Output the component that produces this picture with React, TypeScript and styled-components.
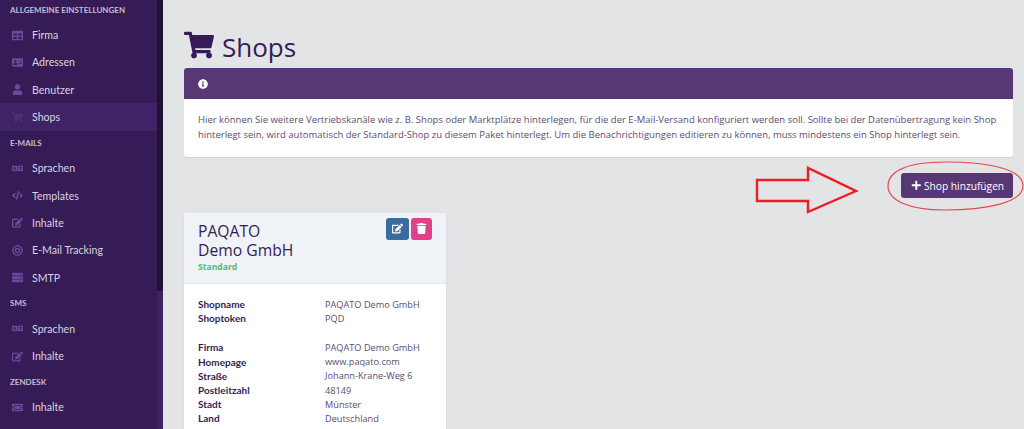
import React from 'react';
import styled, { createGlobalStyle } from 'styled-components';
import {
  FaAddressCard,
  FaBullseye,
  FaCode,
  FaEdit,
  FaInfoCircle,
  FaLanguage,
  FaPlus,
  FaServer,
  FaShoppingCart,
  FaTable,
  FaTicketAlt,
  FaTrash,
  FaUser,
} from 'react-icons/fa';
import { IconType } from 'react-icons';

const GlobalStyle = createGlobalStyle`
  html, body {
    margin: 0;
    height: 100%;
    overflow: hidden;
    background: #e3e4e6;
    font-family: "Open Sans", "Noto Sans", sans-serif;
  }
  * { box-sizing: border-box; }
`;

type NavEntry = { label: string; icon: IconType; active?: boolean };
type NavSection = { title: string; items: NavEntry[] };

const sections: NavSection[] = [
  {
    title: 'ALLGEMEINE EINSTELLUNGEN',
    items: [
      { label: 'Firma', icon: FaTable },
      { label: 'Adressen', icon: FaAddressCard },
      { label: 'Benutzer', icon: FaUser },
      { label: 'Shops', icon: FaShoppingCart, active: true },
    ],
  },
  {
    title: 'E-MAILS',
    items: [
      { label: 'Sprachen', icon: FaLanguage },
      { label: 'Templates', icon: FaCode },
      { label: 'Inhalte', icon: FaEdit },
      { label: 'E-Mail Tracking', icon: FaBullseye },
      { label: 'SMTP', icon: FaServer },
    ],
  },
  {
    title: 'SMS',
    items: [
      { label: 'Sprachen', icon: FaLanguage },
      { label: 'Inhalte', icon: FaEdit },
    ],
  },
  { title: 'ZENDESK', items: [{ label: 'Inhalte', icon: FaTicketAlt }] },
];

const shopRows = [
  ['Shopname', 'PAQATO Demo GmbH'],
  ['Shoptoken', 'PQD'],
];

const addressRows = [
  ['Firma', 'PAQATO Demo GmbH'],
  ['Homepage', 'www.paqato.com'],
  ['Straße', 'Johann-Krane-Weg 6'],
  ['Postleitzahl', '48149'],
  ['Stadt', 'Münster'],
  ['Land', 'Deutschland'],
];

const App = () => {
  return (
    <>
      <GlobalStyle />
      <StyledPage>
        <StyledSidebar>
          <StyledNav>
            {sections.map((section) => (
              <div key={section.title}>
                <StyledSectionTitle>{section.title}</StyledSectionTitle>
                {section.items.map((item) => (
                  <StyledNavItem key={item.label} $active={item.active}>
                    <StyledNavIcon $active={item.active}>
                      <item.icon />
                    </StyledNavIcon>
                    {item.label}
                  </StyledNavItem>
                ))}
              </div>
            ))}
          </StyledNav>
          <StyledScrollTrack>
            <StyledScrollThumb />
          </StyledScrollTrack>
        </StyledSidebar>

        <StyledMain>
          <StyledTitle>
            <FaShoppingCart />
            Shops
          </StyledTitle>

          <StyledAlert>
            <StyledAlertHead>
              <FaInfoCircle />
            </StyledAlertHead>
            <StyledAlertBody>
              Hier können Sie weitere Vertriebskanäle wie z. B. Shops oder Marktplätze hinterlegen, für die der
              E-Mail-Versand konfiguriert werden soll. Sollte bei der Datenübertragung kein Shop hinterlegt sein, wird
              automatisch der Standard-Shop zu diesem Paket hinterlegt. Um die Benachrichtigungen editieren zu können,
              muss mindestens ein Shop hinterlegt sein.
            </StyledAlertBody>
          </StyledAlert>

          <StyledActions>
            <StyledAddButton>
              <FaPlus />
              Shop hinzufügen
            </StyledAddButton>
          </StyledActions>

          <StyledCard>
            <StyledCardHead>
              <div>
                <StyledCardTitle>
                  PAQATO
                  <br />
                  Demo GmbH
                </StyledCardTitle>
                <StyledBadge>Standard</StyledBadge>
              </div>
              <StyledCardButtons>
                <StyledIconButton $color="#3a6c9f" $width={23.5}>
                  <FaEdit />
                </StyledIconButton>
                <StyledIconButton $color="#e2418a" $width={21}>
                  <FaTrash />
                </StyledIconButton>
              </StyledCardButtons>
            </StyledCardHead>
            <StyledCardBody>
              <StyledInfoGrid>
                {shopRows.map(([key, value]) => (
                  <React.Fragment key={key}>
                    <StyledKey>{key}</StyledKey>
                    <StyledValue>{value}</StyledValue>
                  </React.Fragment>
                ))}
              </StyledInfoGrid>
              <StyledInfoGrid>
                {addressRows.map(([key, value]) => (
                  <React.Fragment key={key}>
                    <StyledKey>{key}</StyledKey>
                    <StyledValue>{value}</StyledValue>
                  </React.Fragment>
                ))}
              </StyledInfoGrid>
            </StyledCardBody>
          </StyledCard>
        </StyledMain>

        {/* red annotation drawn over the screenshot */}
        <StyledAnnotation viewBox="0 0 1024 429" fill="none">
          <path
            d="M757 180 H808 V168 L856 191 L808 212 V201 H757 Z"
            stroke="#ee1c25"
            strokeWidth="2.4"
            fill="none"
          />
          <path
            d="M888 186 C888 171 908 162 945 162 C985 162 1023 168 1023 186 C1023 203 985 210 945 210 C908 210 888 200 888 186 Z"
            stroke="#e8474d"
            strokeWidth="1.2"
          />
        </StyledAnnotation>
      </StyledPage>
    </>
  );
};

export default App;

const StyledPage = styled.div`
  position: relative;
  display: flex;
  width: 1024px;
  height: 429px;
  overflow: hidden;
  background: #e3e4e6;
`;

const StyledSidebar = styled.aside`
  display: flex;
  flex: none;
  width: 163px;
  height: 429px;
  background: #351c56;
`;

const StyledNav = styled.nav`
  flex: 1;
  min-width: 0;
  margin-top: -2.5px;
  font-family: 'Lato', sans-serif;
`;

const StyledSectionTitle = styled.div`
  display: flex;
  align-items: center;
  height: 24px;
  padding-left: 10px;
  font-size: 8px;
  font-weight: 700;
  color: #c6bdd3;
  white-space: nowrap;
`;

const StyledNavItem = styled.div<{ $active?: boolean }>`
  display: flex;
  align-items: center;
  height: 27.3px;
  padding-left: 12px;
  font-size: 10.6px;
  color: #d9d3e2;
  background: ${({ $active }) => ($active ? '#3f2366' : 'transparent')};
`;

const StyledNavIcon = styled.span<{ $active?: boolean }>`
  display: flex;
  flex: none;
  justify-content: center;
  width: 11px;
  margin-right: 9px;
  font-size: 11px;
  color: ${({ $active }) => ($active ? '#4c2f77' : '#6a4a9b')};

  svg {
    flex: none;
    width: auto;
    height: 11px;
  }
`;

const StyledScrollTrack = styled.div`
  flex: none;
  width: 6px;
  background: #3e2362;
`;

const StyledScrollThumb = styled.div`
  width: 6px;
  height: 291px;
  background: #1f1236;
`;

const StyledMain = styled.main`
  flex: 1;
  min-width: 0;
  padding: 27px 11px 0 21px;
`;

const StyledTitle = styled.h1`
  display: flex;
  align-items: center;
  gap: 8px;
  height: 41px;
  margin: 0;
  padding-bottom: 1px;
  font-size: 26px;
  font-weight: 500;
  color: #351c56;

  svg {
    flex: none;
    width: 30px;
    height: 30px;
    margin-top: -5px;
  }
`;

const StyledAlert = styled.section`
  background: #fff;
  border-radius: 3px;
  box-shadow: 0 1px 1px rgba(0, 0, 0, 0.08);
  overflow: hidden;
`;

const StyledAlertHead = styled.div`
  display: flex;
  align-items: center;
  height: 31px;
  padding-left: 14px;
  font-size: 10px;
  color: #fff;
  background: #573875;
`;

const StyledAlertBody = styled.div`
  height: 58px;
  padding: 13px 14px 0;
  font-size: 9.5px;
  line-height: 15px;
  color: #5c4d70;
`;

const StyledActions = styled.div`
  display: flex;
  justify-content: flex-end;
  margin-top: 16px;
`;

const StyledAddButton = styled.button`
  display: flex;
  align-items: center;
  gap: 2.5px;
  width: 112px;
  height: 25px;
  padding: 0 0 0 10px;
  font-family: inherit;
  font-size: 10.2px;
  color: #fff;
  white-space: nowrap;
  background: #573875;
  border: none;
  border-radius: 3px;

  svg {
    flex: none;
    width: 10.5px;
    height: 10.5px;
  }
`;

const StyledCard = styled.section`
  width: 262px;
  margin-top: 15px;
  background: #fff;
  box-shadow: 0 1px 2px rgba(0, 0, 0, 0.06);
`;

const StyledCardHead = styled.header`
  display: flex;
  justify-content: space-between;
  height: 71px;
  padding: 5px 14px 0 14px;
  background: #eff2f6;
  border-bottom: 1px solid #e4e7eb;
`;

const StyledCardTitle = styled.h2`
  margin: 4px 0 0;
  font-size: 15.7px;
  font-weight: 500;
  line-height: 19px;
  color: #351c56;
`;

const StyledBadge = styled.div`
  font-size: 8.6px;
  font-weight: 700;
  line-height: 14px;
  color: #4fbb78;
`;

const StyledCardButtons = styled.div`
  display: flex;
  gap: 2px;
`;

const StyledIconButton = styled.button<{ $color: string; $width: number }>`
  display: flex;
  align-items: center;
  justify-content: center;
  width: ${({ $width }) => $width}px;
  height: 21.5px;
  padding: 0;
  font-size: 11px;
  color: #fff;
  background: ${({ $color }) => $color};
  border: none;
  border-radius: 3px;
`;

const StyledCardBody = styled.div`
  display: flex;
  flex-direction: column;
  gap: 15px;
  padding: 13px 14px 20px;
`;

const StyledInfoGrid = styled.dl`
  display: grid;
  grid-template-columns: 127px 1fr;
  grid-auto-rows: 14.2px;
  align-items: center;
  margin: 0;
`;

const StyledKey = styled.dt`
  font-family: 'Lato', sans-serif;
  font-size: 10px;
  font-weight: 700;
  color: #351c56;
`;

const StyledValue = styled.dd`
  margin: 0;
  font-size: 9.2px;
  color: #5c4d70;
`;

const StyledAnnotation = styled.svg`
  position: absolute;
  inset: 0;
  width: 1024px;
  height: 429px;
  pointer-events: none;
`;
